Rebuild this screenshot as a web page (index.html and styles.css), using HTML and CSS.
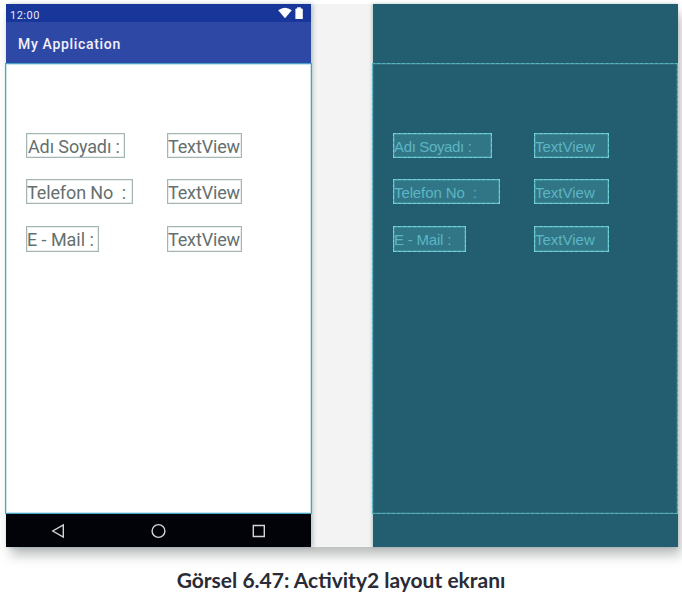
FILE: index.html
```html
<!DOCTYPE html>
<html lang="tr">
<head>
<meta charset="utf-8">
<title>Activity2 layout</title>
<link rel="stylesheet" href="styles.css">
</head>
<body>
<figure class="figure">
  <div class="editor">
    <section class="phone">
      <div class="status">
        <span class="clock">12:00</span>
        <svg class="status-icons" width="27" height="14" viewBox="0 0 27 14">
          <path d="M0.2 5.2Q7 0.2 13.8 5.2L7 13.3Z" fill="#fff"/>
          <path d="M17.4 4.5Q17.4 3.5 18.4 3.5H19.2V2.2H22.8V3.5H23.8Q24.8 3.5 24.8 4.5V14H17.4Z" fill="#fff"/>
        </svg>
      </div>
      <div class="appbar"><span class="title">My Application</span></div>
      <div class="content">
        <div class="row"><span class="field name"><span class="t1">Adı Soyadı :</span></span><span class="field value"><span class="tv">TextView</span></span></div>
        <div class="row"><span class="field tel"><span class="t2">Telefon No&nbsp; :</span></span><span class="field value"><span class="tv">TextView</span></span></div>
        <div class="row tall"><span class="field mail"><span class="t3">E - Mail :</span></span><span class="field value"><span class="tv">TextView</span></span></div>
      </div>
      <div class="nav">
        <svg width="305" height="33" viewBox="0 0 305 33" fill="none" stroke="#d4d6d6" stroke-width="1.4">
          <path d="M57.3 11V23L46.8 17Z"/>
          <circle cx="152.5" cy="17" r="6.4"/>
          <path d="M247.3 11.5H258.3V22.5H247.3Z"/>
        </svg>
      </div>
    </section>
    <section class="blueprint">
      <div class="bp-top"></div>
      <div class="content bp-content">
        <div class="row"><span class="field name"><span class="b1">Adı Soyadı :</span></span><span class="field value"><span class="bv">TextView</span></span></div>
        <div class="row"><span class="field tel"><span class="b2">Telefon No&nbsp; :</span></span><span class="field value"><span class="bv">TextView</span></span></div>
        <div class="row tall"><span class="field mail"><span class="b3">E - Mail :</span></span><span class="field value"><span class="bv">TextView</span></span></div>
      </div>
    </section>
  </div>
  <figcaption class="caption">Görsel 6.47: Activity2 layout ekranı</figcaption>
</figure>
</body>
</html>
```
FILE: styles.css
```css
* { box-sizing: border-box; }
body { margin: 0; background: #fff; overflow: hidden; }
.figure { margin: 0; padding: 4px 4px 0 6px; height: 597px; }
.editor {
  display: flex;
  justify-content: space-between;
  height: 543px;
  background: #f3f3f3;
  box-shadow: 4px 9px 11px -1px rgba(65, 70, 70, .36);
}
.phone, .blueprint { display: flex; flex-direction: column; width: 305px; }
.phone { box-shadow: 2px 0 4px rgba(70, 110, 110, .35); font-family: Roboto, sans-serif; }
.status {
  display: flex;
  justify-content: space-between;
  height: 18px;
  padding: 0 6px 0 4px;
  background: #19379a;
  color: #e8e4f5;
}
.clock { font-size: 11px; line-height: 24px; letter-spacing: .5px; }
.status-icons { margin-top: 1px; }
.appbar { height: 42px; padding-left: 12px; background: #2e48a5; color: #f4f0fb; }
.title { font-size: 14px; font-weight: 500; line-height: 44px; letter-spacing: .68px; }
.content {
  height: 451px;
  margin: -1px -1px 0;
  padding: 69px 0 0 20px;
  border: 1px solid #48a3c6;
  box-shadow: inset 0 0 0 1px rgba(90, 190, 210, .35);
  background: #fff;
}
.row { display: flex; height: 25px; margin-bottom: 21px; }
.row:nth-child(2) { margin-bottom: 22px; }
.row.tall { height: 26px; }
.field {
  height: 100%;
  border: 1px solid #a5b5b2;
  box-shadow: inset 0 0 0 1px rgba(165, 181, 178, .25);
  color: #65706e;
  font-size: 18px;
  line-height: 25px;
  white-space: nowrap;
}
.name { width: 99px; margin-right: 42px; }
.tel { width: 107px; margin-right: 34px; }
.mail { width: 73px; margin-right: 68px; }
.value { width: 75px; }
.t1 { letter-spacing: -.12px; margin-left: 1px; }
.t2 { letter-spacing: -.12px; }
.t3 { letter-spacing: -.05px; }
.tv { letter-spacing: -.15px; }
.nav { height: 33px; background: #020308; }
.nav svg { display: block; }
.blueprint {
  background: #235d70;
  box-shadow: -1px 0 3px rgba(70, 130, 130, .4);
  font-family: "Liberation Sans", sans-serif;
}
.bp-top { height: 60px; }
.bp-content {
  margin-right: 0;
  background: none;
  border: 1px dashed #65bfc9;
  box-shadow: inset 0 0 0 1px rgba(90, 180, 192, .2);
  outline: 1px solid rgba(82, 175, 188, .7);
  outline-offset: -1px;
}
.bp-content .field {
  border: 1px dashed #8fe4e6;
  outline: 1px solid rgba(105, 205, 212, .75);
  outline-offset: -1px;
  box-shadow: inset 0 0 0 1px rgba(105, 198, 207, .25);
  background: #317687;
  color: #5cb5c2;
  font-size: 15px;
  line-height: 25px;
}
.b1 { letter-spacing: -.35px; }
.b2 { letter-spacing: -.1px; }
.b3 { letter-spacing: -.2px; }
.bv { letter-spacing: 0; }
.caption {
  margin: 20px 2px 0 0;
  text-align: center;
  color: #292c36;
  font: bold 21px/26px Lato, sans-serif;
}
```
